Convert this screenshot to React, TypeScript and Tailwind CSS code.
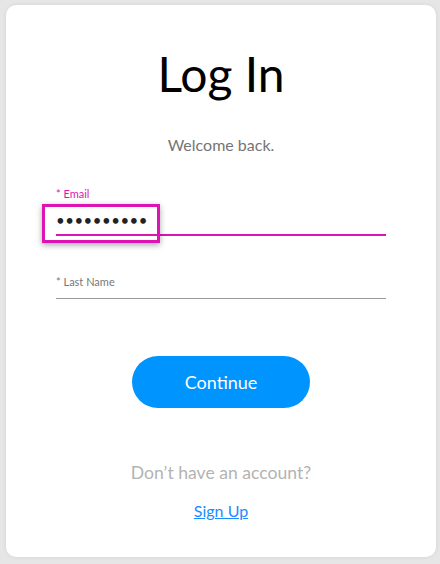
export default function App() {
  return (
    <div className="min-h-screen bg-[#e6e6e6] pl-[6px] pr-[4px] pt-[5px] pb-[7px] font-['Lato','Open_Sans',sans-serif]">
      <div className="h-[552px] rounded-[10px] bg-white shadow-[0_0_4px_rgba(0,0,0,0.08)] px-[50px] pt-[40px] flex flex-col items-center">
        <h1 className="text-[48px] leading-[58px] text-black">Log In</h1>

        <p className="mt-[32px] text-[16px] leading-[20px] text-[#757575]">
          Welcome back.
        </p>

        <div className="w-full mt-[32px]">
          <label className="block text-[11px] leading-[14px] text-[#dc14b4]">
            * Email
          </label>
          <div className="relative">
            <input
              type="password"
              readOnly
              value="1234567890"
              className="w-full bg-transparent pt-[9px] pb-[4px] text-[15px] leading-[20px] tracking-[0.5px] text-[#222] border-b-2 border-[#dc14b4] outline-none"
            />
            <div className="pointer-events-none absolute left-[-14px] top-[3px] w-[118px] h-[39px] border-[3px] border-[#dc14b4] shadow-[0_2px_6px_rgba(0,0,0,0.35)]" />
          </div>
        </div>

        <div className="w-full mt-[39px]">
          <label className="block text-[11px] leading-[14px] text-[#777]">
            * Last Name
          </label>
          <div className="h-[10px] border-b border-[#999]" />
        </div>

        <button className="mt-[57px] w-[178px] h-[52px] rounded-full bg-[#0094ff] text-white text-[18px]">
          Continue
        </button>

        <p className="mt-[54px] text-[17.6px] leading-[22px] text-[#b3b3b3]">
          Don’t have an account?
        </p>

        <a href="#" className="mt-[17px] text-[16px] leading-[20px] text-[#1a8cff] underline">
          Sign Up
        </a>
      </div>
    </div>
  );
}
